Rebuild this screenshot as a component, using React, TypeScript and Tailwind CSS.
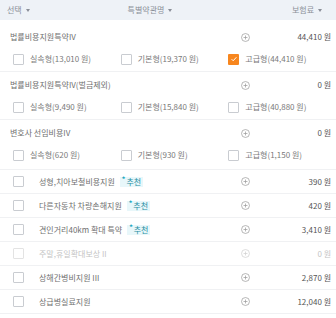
const PlusIcon = ({ faded }: { faded?: boolean }) => (
  <svg width="9" height="9" viewBox="0 0 10 10" className={faded ? "text-[#cfcfcf]" : "text-[#9a9a9a]"}>
    <circle cx="5" cy="5" r="4.4" fill="none" stroke="currentColor" strokeWidth="0.8" />
    <path d="M5 2.8v4.4M2.8 5h4.4" stroke="currentColor" strokeWidth="0.8" />
  </svg>
);

const CheckBox = ({ checked, faded }: { checked?: boolean; faded?: boolean }) =>
  checked ? (
    <span className="flex h-[11px] w-[11px] shrink-0 items-center justify-center rounded-[1px] bg-[#f7861e]">
      <svg width="8" height="8" viewBox="0 0 10 10">
        <path d="M2 5.2l2 2 4-4.4" fill="none" stroke="#fff" strokeWidth="1.2" />
      </svg>
    </span>
  ) : (
    <span
      className={
        "block h-[11px] w-[11px] shrink-0 rounded-[1px] border bg-white " +
        (faded ? "border-[#e3e3e3]" : "border-[#c9ccd1]")
      }
    />
  );

const Caret = () => (
  <svg width="4" height="3" viewBox="0 0 4 3" className="ml-[4px] text-[#8a8f98]">
    <path d="M0 0h4L2 3z" fill="currentColor" />
  </svg>
);

type Option = { label: string; checked?: boolean };

const groups: { title: string; price: string; options: Option[] }[] = [
  {
    title: "법률비용지원특약IV",
    price: "44,410 원",
    options: [
      { label: "실속형(13,010 원)" },
      { label: "기본형(19,370 원)" },
      { label: "고급형(44,410 원)", checked: true },
    ],
  },
  {
    title: "법률비용지원특약IV(벌금제외)",
    price: "0 원",
    options: [
      { label: "실속형(9,490 원)" },
      { label: "기본형(15,840 원)" },
      { label: "고급형(40,880 원)" },
    ],
  },
  {
    title: "변호사 선임비용IV",
    price: "0 원",
    options: [
      { label: "실속형(620 원)" },
      { label: "기본형(930 원)" },
      { label: "고급형(1,150 원)" },
    ],
  },
];

const rows: { title: string; price: string; recommend?: boolean; faded?: boolean }[] = [
  { title: "성형,치아보철비용지원", price: "390 원", recommend: true },
  { title: "다른자동차 차량손해지원", price: "420 원", recommend: true },
  { title: "견인거리40km 확대 특약", price: "3,410 원", recommend: true },
  { title: "주말,휴일확대보상 II", price: "0 원", faded: true },
  { title: "상해간병비지원 III", price: "2,870 원" },
  { title: "상급병실료지원", price: "12,040 원" },
];

const App: React.FC = () => {
  return (
    <div className="h-[318px] w-[336px] overflow-hidden bg-white font-['Noto_Sans_CJK_KR',sans-serif] text-[8px] leading-none">
      {/* header */}
      <div className="flex h-[20px] items-center bg-[#eef2f7] text-[#8a8f98]">
        <div className="flex w-[100px] items-center pl-[7px]">
          선택
          <Caret />
        </div>
        <div className="flex w-[100px] items-center justify-center">
          특별약관명
          <Caret />
        </div>
        <div className="flex flex-1 items-center justify-end pr-[14px]">
          보험료
          <Caret />
        </div>
      </div>

      <div className="pt-[4px]">
        {groups.map((g, i) => (
          <div
            key={g.title}
            className={"border-b border-[#f0f1f3] " + (i === 2 ? "h-[50px]" : "h-[48px]")}
          >
            <div className="flex h-[26px] items-center">
              <div className="flex-1 pl-[10px] text-[#707070]">{g.title}</div>
              <div className="flex w-[20px] justify-center">
                <PlusIcon />
              </div>
              <div className="w-[81px] pr-[5px] text-right text-[#555]">{g.price}</div>
            </div>
            <div className="flex h-[18px] items-center pl-[13px] text-[#7a7a7a]">
              {g.options.map((o) => (
                <div key={o.label} className="flex w-[110px] items-center gap-[6px]">
                  <CheckBox checked={o.checked} />
                  <span>{o.label}</span>
                </div>
              ))}
            </div>
          </div>
        ))}

        {rows.map((r) => (
          <div key={r.title} className="flex h-[24px] items-center border-b border-[#f0f1f3]">
            <div className="flex flex-1 items-center pl-[13px]">
              <CheckBox faded={r.faded} />
              <span className={"ml-[15px] " + (r.faded ? "text-[#c4c4c4]" : "text-[#707070]")}>
                {r.title}
              </span>
              {r.recommend && (
                <span className="ml-[5px] flex h-[10px] items-center bg-[#e8f7fa] px-[2px] text-[#2a8fa3]">
                  <span className="mr-[1px] -translate-y-[2px] text-[7px] font-bold text-[#16a5bd]">*</span>
                  추천
                </span>
              )}
            </div>
            <div className="flex w-[20px] justify-center">
              <PlusIcon faded={r.faded} />
            </div>
            <div
              className={
                "w-[81px] pr-[5px] text-right " + (r.faded ? "text-[#c4c4c4]" : "text-[#555]")
              }
            >
              {r.price}
            </div>
          </div>
        ))}
      </div>
    </div>
  );
};

export default App;
